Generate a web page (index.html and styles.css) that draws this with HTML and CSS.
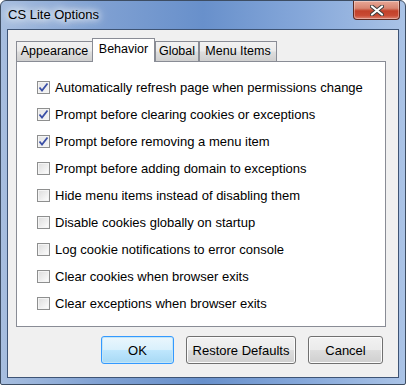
FILE: index.html
```html
<!DOCTYPE html>
<html lang="en">
<head>
    <meta charset="UTF-8">
    <title>CS Lite Options</title>
    <link rel="stylesheet" href="styles.css">
</head>
<body>
    <div class="window">
        <div class="titlebar">
            <span class="title">CS Lite Options</span>
            <button class="close-btn" aria-label="Close">
                <svg width="14" height="11" viewBox="0 0 14 11">
                    <path d="M2 1.5 L12 9.5 M12 1.5 L2 9.5" stroke="#3b3b3b" stroke-width="4" stroke-linecap="round"/>
                    <path d="M2 1.5 L12 9.5 M12 1.5 L2 9.5" stroke="#ffffff" stroke-width="2.2" stroke-linecap="round"/>
                </svg>
            </button>
        </div>

        <div class="client">
            <div class="tabs">
                <div class="tab">Appearance</div>
                <div class="tab active">Behavior</div>
                <div class="tab">Global</div>
                <div class="tab">Menu Items</div>
            </div>

            <div class="panel" id="options"></div>

            <div class="buttons">
                <button class="btn default">OK</button>
                <button class="btn wide">Restore Defaults</button>
                <button class="btn">Cancel</button>
            </div>
        </div>
    </div>

    <script>
        // Behavior tab options
        const options = [
            { label: "Automatically refresh page when permissions change", checked: true },
            { label: "Prompt before clearing cookies or exceptions", checked: true },
            { label: "Prompt before removing a menu item", checked: true },
            { label: "Prompt before adding domain to exceptions", checked: false },
            { label: "Hide menu items instead of disabling them", checked: false },
            { label: "Disable cookies globally on startup", checked: false },
            { label: "Log cookie notifications to error console", checked: false },
            { label: "Clear cookies when browser exits", checked: false },
            { label: "Clear exceptions when browser exits", checked: false }
        ];

        const panel = document.getElementById('options');
        const tick = `<svg width="11" height="11" viewBox="0 0 11 11"><path d="M1.5 5.5 L4 8.5 L9.5 1.5" fill="none" stroke="#3a4fa6" stroke-width="1.8"/></svg>`;

        options.forEach(opt => {
            const row = document.createElement('label');
            row.className = 'option';
            row.innerHTML = `
                <span class="check${opt.checked ? ' checked' : ''}">${opt.checked ? tick : ''}</span>
                <span class="option-label">${opt.label}</span>
            `;
            row.addEventListener('click', (e) => {
                e.preventDefault();
                opt.checked = !opt.checked;
                const box = row.querySelector('.check');
                box.classList.toggle('checked', opt.checked);
                box.innerHTML = opt.checked ? tick : '';
            });
            panel.appendChild(row);
        });
    </script>
</body>
</html>
```

FILE: styles.css
```css
* {
    margin: 0;
    padding: 0;
    box-sizing: border-box;
}

body {
    font-family: 'Liberation Sans', Arial, sans-serif;
    font-size: 13px;
    color: #000;
    background: #ffffff;
}

.window {
    width: 406px;
    height: 385px;
    border: 1px solid #3d4d63;
    border-radius: 6px 6px 2px 2px;
    padding: 0 6px 6px 6px;
    background: linear-gradient(to right, #a7bedf 0%, #7fa0d2 25%, #6890cb 50%, #86a8da 75%, #aac3e6 100%);
    display: flex;
    flex-direction: column;
}

.titlebar {
    height: 28px;
    display: flex;
    align-items: flex-start;
    justify-content: space-between;
}

.title {
    margin-top: 6px;
    margin-left: 1px;
    font-size: 13px;
    text-shadow: 0 0 6px #ffffff, 0 0 10px #ffffff, 0 0 12px #eef4fb;
}

.close-btn {
    width: 47px;
    height: 19px;
    margin-right: -1px;
    border: 1px solid #5b2a22;
    border-top: none;
    border-radius: 0 0 4px 4px;
    background: linear-gradient(to bottom, #e8a796 0%, #d88672 40%, #c2412a 55%, #c94a33 80%, #dc8472 100%);
    box-shadow: inset 0 0 0 1px rgba(255,255,255,0.35);
    display: flex;
    align-items: center;
    justify-content: center;
    cursor: pointer;
}

.client {
    flex: 1;
    border: 1px solid #3e5475;
    background: #f0f0f0;
    padding: 8px 12px 13px 8px;
    display: flex;
    flex-direction: column;
}

.tabs {
    display: flex;
    align-items: flex-end;
    height: 23px;
    position: relative;
    z-index: 1;
}

.tab {
    height: 20px;
    line-height: 19px;
    font-size: 12.5px;
    text-align: center;
    border: 1px solid #898c95;
    border-bottom: none;
    background: linear-gradient(to bottom, #f2f2f2 0%, #ebebeb 45%, #dddddd 55%, #cfcfcf 100%);
    margin-right: -1px;
    white-space: nowrap;
}

.tab:first-child {
    width: 77px;
}

.tab.active {
    height: 24px;
    margin-bottom: -1px;
    line-height: 20px;
    background: #ffffff;
    position: relative;
    z-index: 2;
    width: 63px;
}

.tab:nth-child(3) {
    width: 44px;
    margin-left: 1px;
}

.tab:nth-child(4) {
    width: 78px;
    margin-left: 1px;
}

.panel {
    height: 266px;
    border: 1px solid #898c95;
    background: #ffffff;
    padding: 12px 0 8px 20px;
}

.option {
    height: 27px;
    display: flex;
    align-items: center;
    gap: 5px;
    cursor: default;
}

.check {
    width: 13px;
    height: 13px;
    border: 1px solid #8e8f8f;
    background: linear-gradient(135deg, #dcdcdc 0%, #f0f0f0 60%, #ffffff 100%);
    box-shadow: inset 0 0 0 1px #f4f4f4;
    display: flex;
    align-items: center;
    justify-content: center;
    flex-shrink: 0;
}

.check.checked {
    background: linear-gradient(135deg, #e6e6e6 0%, #f4f4f4 100%);
}

.option-label {
    white-space: nowrap;
}

.buttons {
    display: flex;
    justify-content: flex-end;
    gap: 12px;
    margin-top: 9px;
    margin-right: 3px;
}

.btn {
    height: 28px;
    width: 75px;
    font-family: inherit;
    font-size: 13px;
    color: #000;
    border: 1px solid #707070;
    border-radius: 3px;
    background: linear-gradient(to bottom, #f2f2f2 0%, #ebebeb 48%, #dddddd 52%, #cfcfcf 100%);
    box-shadow: inset 0 0 0 1px #fbfbfb;
    cursor: pointer;
}

.btn.default {
    width: 73px;
    border-color: #3399ff;
    background: linear-gradient(to bottom, #eaf6fd 0%, #d9f0fc 48%, #bee6fd 52%, #a7d9f5 100%);
    box-shadow: inset 0 0 0 1px #c4e5f6;
}

.btn.wide {
    width: 110px;
}
```
